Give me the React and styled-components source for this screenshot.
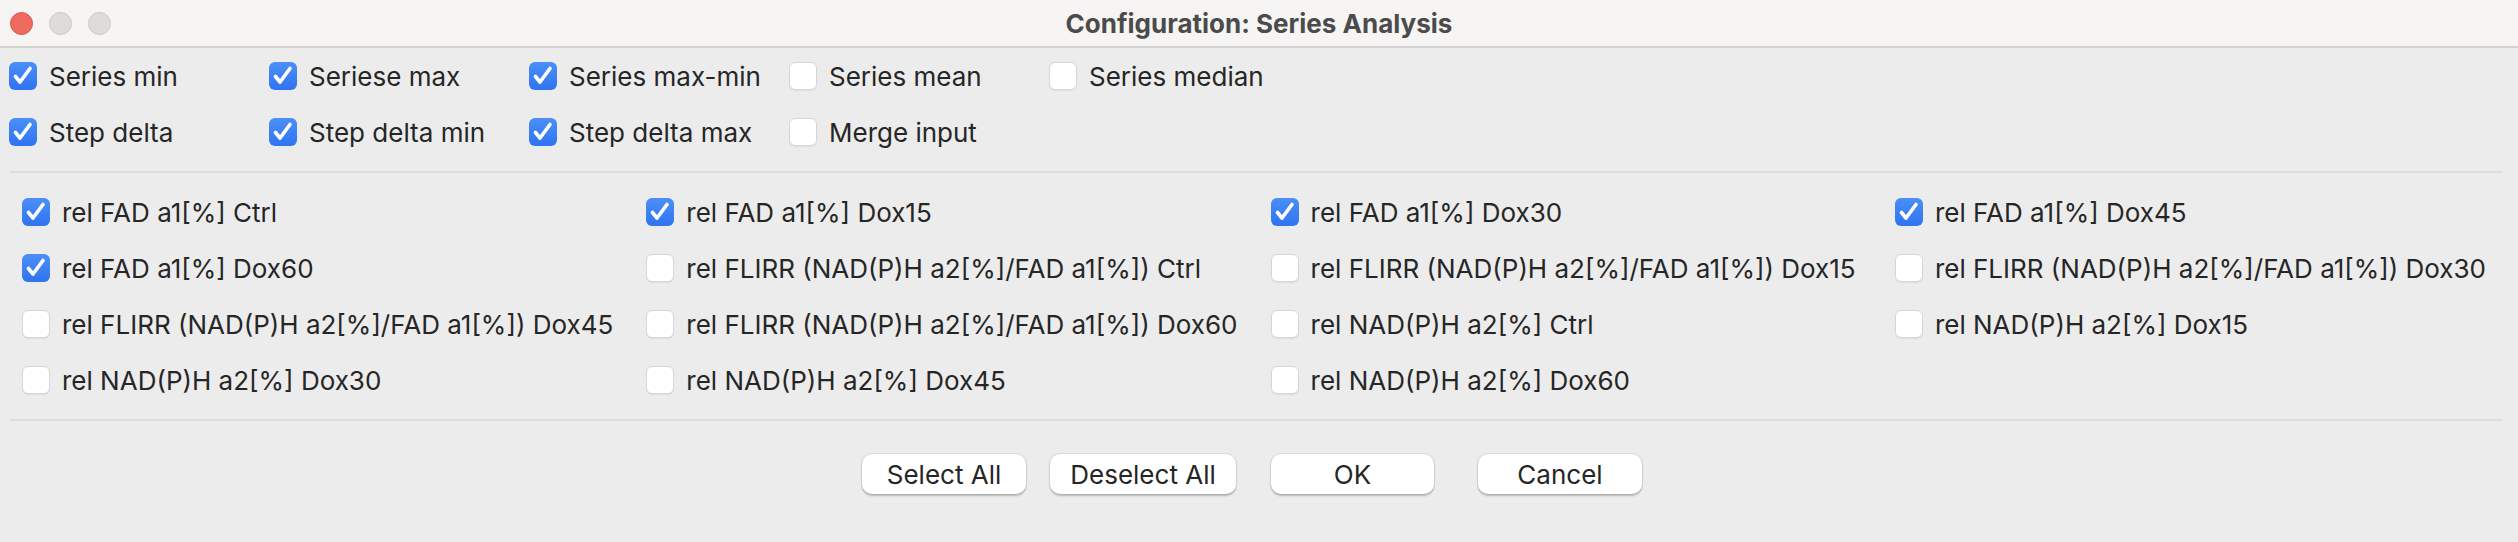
import React from 'react';
import styled, { createGlobalStyle } from 'styled-components';

const GlobalStyle = createGlobalStyle`
  html, body {
    margin: 0;
    padding: 0;
    background: #ececec;
  }
  body {
    font-family: Inter, "Liberation Sans", sans-serif;
    -webkit-font-smoothing: antialiased;
  }
`;

const Window = styled.div`
  width: 2518px;
  height: 542px;
  background: #ececec;
  display: flex;
  flex-direction: column;
  overflow: hidden;
`;

const TitleBar = styled.div`
  height: 46px;
  background: #f6f5f4;
  border-bottom: 2px solid #d3d3d3;
  display: grid;
  grid-template-columns: 1fr auto 1fr;
  align-items: center;
`;

const Lights = styled.div`
  display: flex;
  gap: 16px;
  padding-left: 10px;
`;

const Light = styled.span`
  width: 23px;
  height: 23px;
  box-sizing: border-box;
  border-radius: 50%;
  background: ${p => (p.$red ? '#ef6b60' : '#dddcdb')};
  border: 1px solid ${p => (p.$red ? '#d8584e' : '#c9c8c7')};
`;

const Title = styled.div`
  font-size: 26px;
  font-weight: 700;
  color: #4b4b4b;
`;

const Options = styled.div`
  display: grid;
  grid-template-columns: repeat(5, 260px);
  row-gap: 28px;
  padding: 14px 0 0 9px;
`;

const Separator = styled.div`
  height: 2px;
  background: #dedede;
  margin: ${p => p.$top}px 15px 0 10px;
`;

const SeriesGrid = styled.div`
  display: grid;
  grid-template-columns: repeat(4, 624.3px);
  row-gap: 28px;
  padding: 25px 0 0 22px;
`;

const Item = styled.label`
  display: flex;
  align-items: center;
  gap: 12px;
  height: 28px;
  font-size: 26px;
  color: #262626;
  white-space: nowrap;
`;

const Box = styled.span`
  width: 28px;
  height: 28px;
  box-sizing: border-box;
  border-radius: 6px;
  flex-shrink: 0;
  display: flex;
  align-items: center;
  justify-content: center;
  background: ${p => (p.$checked ? 'linear-gradient(#4b8ff8, #2f74f1)' : '#ffffff')};
  border: ${p => (p.$checked ? 'none' : '1px solid #d6d6d6')};
  box-shadow: ${p => (p.$checked ? 'none' : '0 1px 1px rgba(0,0,0,0.06)')};
`;

const ButtonBar = styled.div`
  display: flex;
  justify-content: center;
  padding: 33px 14px 0 0;
`;

const Button = styled.button`
  height: 40px;
  width: ${p => p.$w}px;
  margin-left: ${p => p.$gap || 0}px;
  background: #ffffff;
  border: none;
  border-radius: 10px;
  box-shadow: 0 0 0 1px rgba(0,0,0,0.06), 0 1.5px 2px rgba(0,0,0,0.22);
  font-family: Inter, "Liberation Sans", sans-serif;
  font-size: 26px;
  color: #262626;
  padding: 0;
`;

const Check = ({ checked, label }) => (
  <Item>
    <Box $checked={checked}>
      {checked && (
        <svg width="28" height="28" viewBox="0 0 28 28">
          <polyline points="6.5,14.5 11,20 21,6.5" fill="none" stroke="#fff" strokeWidth="3.6" strokeLinecap="round" strokeLinejoin="round" />
        </svg>
      )}
    </Box>
    {label}
  </Item>
);

const options = [
  ['Series min', true],
  ['Seriese max', true],
  ['Series max-min', true],
  ['Series mean', false],
  ['Series median', false],
  ['Step delta', true],
  ['Step delta min', true],
  ['Step delta max', true],
  ['Merge input', false],
];

const flirr = 'rel FLIRR (NAD(P)H a2[%]/FAD a1[%])';
const series = [
  ['rel FAD a1[%] Ctrl', true],
  ['rel FAD a1[%] Dox15', true],
  ['rel FAD a1[%] Dox30', true],
  ['rel FAD a1[%] Dox45', true],
  ['rel FAD a1[%] Dox60', true],
  [`${flirr} Ctrl`, false],
  [`${flirr} Dox15`, false],
  [`${flirr} Dox30`, false],
  [`${flirr} Dox45`, false],
  [`${flirr} Dox60`, false],
  ['rel NAD(P)H a2[%] Ctrl', false],
  ['rel NAD(P)H a2[%] Dox15', false],
  ['rel NAD(P)H a2[%] Dox30', false],
  ['rel NAD(P)H a2[%] Dox45', false],
  ['rel NAD(P)H a2[%] Dox60', false],
];

export default function App() {
  return (
    <>
      <GlobalStyle />
      <Window>
        <TitleBar>
          <Lights>
            <Light $red />
            <Light />
            <Light />
          </Lights>
          <Title>Configuration: Series Analysis</Title>
          <div />
        </TitleBar>
        <Options>
          {options.map(([label, checked]) => (
            <Check key={label} label={label} checked={checked} />
          ))}
        </Options>
        <Separator $top={25} />
        <SeriesGrid>
          {series.map(([label, checked]) => (
            <Check key={label} label={label} checked={checked} />
          ))}
        </SeriesGrid>
        <Separator $top={25} />
        <ButtonBar>
          <Button $w={164}>Select All</Button>
          <Button $w={186} $gap={24}>Deselect All</Button>
          <Button $w={163} $gap={35}>OK</Button>
          <Button $w={164} $gap={44}>Cancel</Button>
        </ButtonBar>
      </Window>
    </>
  );
}
